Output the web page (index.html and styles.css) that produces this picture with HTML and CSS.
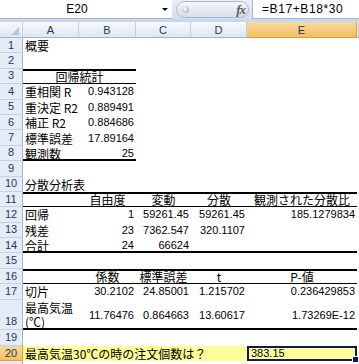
FILE: index.html
```html
<!DOCTYPE html>
<html lang="ja">
<head>
  <meta charset="UTF-8">
  <title>回帰分析 – Excel</title>
  <link rel="stylesheet" href="styles.css">
</head>
<body>

  <!-- Formula bar -->
  <div class="formula-bar">
    <div class="name-box">
      <span class="name-text">E20</span>
      <span class="name-arrow"></span>
    </div>
    <div class="fx-button">
      <span class="fx-knob"></span>
      <span class="fx-label">fx</span>
    </div>
    <div class="formula-input">=B17+B18*30</div>
  </div>
  <div class="bar-gap"></div>

  <!-- Sheet -->
  <div class="sheet">
    <div class="row head-row">
      <div class="hd corner"><span class="corner-mark"></span></div>
      <div class="hd ca">A</div>
      <div class="hd cb">B</div>
      <div class="hd cc">C</div>
      <div class="hd cd">D</div>
      <div class="hd ce sel">E</div>
      <div class="hd cf"></div>
    </div>

    <div class="row"><div class="rh">1</div><div class="cell ca">概要</div></div>
    <div class="row"><div class="rh">2</div></div>
    <div class="row"><div class="rh">3</div><div class="cell cab center head-line">回帰統計</div></div>
    <div class="row"><div class="rh">4</div><div class="cell ca">重相関 R</div><div class="cell cb num">0.943128</div></div>
    <div class="row"><div class="rh">5</div><div class="cell ca">重決定 R2</div><div class="cell cb num">0.889491</div></div>
    <div class="row"><div class="rh">6</div><div class="cell ca">補正 R2</div><div class="cell cb num">0.884686</div></div>
    <div class="row"><div class="rh">7</div><div class="cell ca">標準誤差</div><div class="cell cb num">17.89164</div></div>
    <div class="row"><div class="rh">8</div><div class="cell ca end-line">観測数</div><div class="cell cb num end-line">25</div></div>
    <div class="row"><div class="rh">9</div></div>
    <div class="row"><div class="rh">10</div><div class="cell ca">分散分析表</div></div>

    <div class="row">
      <div class="rh">11</div>
      <div class="cell ca head-line"></div>
      <div class="cell cb center head-line">自由度</div>
      <div class="cell cc center head-line">変動</div>
      <div class="cell cd center head-line">分散</div>
      <div class="cell ce center head-line">観測された分散比</div>
    </div>
    <div class="row">
      <div class="rh">12</div>
      <div class="cell ca">回帰</div>
      <div class="cell cb num">1</div>
      <div class="cell cc num">59261.45</div>
      <div class="cell cd num">59261.45</div>
      <div class="cell ce num">185.1279834</div>
    </div>
    <div class="row">
      <div class="rh">13</div>
      <div class="cell ca">残差</div>
      <div class="cell cb num">23</div>
      <div class="cell cc num">7362.547</div>
      <div class="cell cd num">320.1107</div>
      <div class="cell ce"></div>
    </div>
    <div class="row">
      <div class="rh">14</div>
      <div class="cell ca end-line">合計</div>
      <div class="cell cb num end-line">24</div>
      <div class="cell cc num end-line">66624</div>
      <div class="cell cd end-line"></div>
      <div class="cell ce end-line"></div>
    </div>
    <div class="row"><div class="rh">15</div></div>

    <div class="row">
      <div class="rh">16</div>
      <div class="cell ca head-line"></div>
      <div class="cell cb center head-line">係数</div>
      <div class="cell cc center head-line">標準誤差</div>
      <div class="cell cd center head-line">t</div>
      <div class="cell ce center head-line">P-値</div>
    </div>
    <div class="row">
      <div class="rh">17</div>
      <div class="cell ca">切片</div>
      <div class="cell cb num">30.2102</div>
      <div class="cell cc num">24.85001</div>
      <div class="cell cd num">1.215702</div>
      <div class="cell ce num">0.236429853</div>
    </div>
    <div class="row tall">
      <div class="rh bottom">18</div>
      <div class="cell ca wrap end-line">最高気温<br>(℃)</div>
      <div class="cell cb num end-line">11.76476</div>
      <div class="cell cc num end-line">0.864663</div>
      <div class="cell cd num end-line">13.60617</div>
      <div class="cell ce num end-line">1.73269E-12</div>
    </div>
    <div class="row"><div class="rh">19</div></div>
    <div class="row">
      <div class="rh sel">20</div>
      <div class="cell question">最高気温30℃の時の注文個数は？</div>
      <div class="cell ce active">383.15<span class="fill-handle"></span></div>
    </div>
    <div class="row"><div class="rh"></div></div>
  </div>

</body>
</html>
```

FILE: styles.css
```css
body {
  margin: 0;
  background: #ffffff;
  font-family: "Noto Sans CJK JP", sans-serif;
  font-size: 12px;
  color: #000;
  width: 359px;
  height: 364px;
  overflow: hidden;
}

/* formula bar */
.formula-bar {
  display: flex;
  height: 19px;
  background: linear-gradient(#e9eff8, #d3deee);
}
.name-box {
  width: 172px;
  background: #fff;
  border-bottom: 1px solid #a5b8d3;
  position: relative;
  display: flex;
  align-items: center;
}
.name-text {
  width: 154px;
  text-align: center;
  font-family: "Liberation Sans", sans-serif;
  font-size: 12px;
}
.name-arrow {
  position: absolute;
  left: 162px;
  top: 8px;
  border-left: 3px solid transparent;
  border-right: 3px solid transparent;
  border-top: 3px solid #000;
}
.fx-button {
  width: 73px;
  margin: 1px 3px 1px 4px;
  border: 1px solid #a9b9cf;
  border-radius: 9px;
  background: linear-gradient(#f4f6f9, #d8dee8);
  display: flex;
  align-items: center;
  justify-content: space-between;
  padding: 0 3px 0 5px;
  box-sizing: border-box;
}
.fx-knob {
  width: 7px;
  height: 7px;
  border-radius: 50%;
  background: radial-gradient(circle at 40% 40%, #ffffff, #9aa3b0);
}
.fx-label {
  font-family: "Liberation Serif", serif;
  font-style: italic;
  font-weight: bold;
  font-size: 13px;
  color: #5a5a5a;
  letter-spacing: -1px;
}
.formula-input {
  flex: 1;
  background: #fff;
  border-left: 1px solid #a5b8d3;
  border-bottom: 1px solid #a5b8d3;
  padding-left: 9px;
  line-height: 18px;
  font-family: "Liberation Sans", sans-serif;
  font-size: 12px;
  letter-spacing: 0.6px;
}
.bar-gap {
  height: 3px;
  background: #c9d7ea;
}

/* sheet */
.row {
  display: flex;
  height: 15.4px;
  line-height: 13px;
}
.row.tall {
  height: 30.8px;
}
.head-row {
  height: 16px;
  line-height: 16px;
}
.hd {
  box-sizing: border-box;
  height: 16px;
  text-align: center;
  font-family: "Liberation Sans", sans-serif;
  font-size: 11px;
  color: #1e395b;
  background: linear-gradient(#f6f9fc, #dfe6ef);
  border-right: 1px solid #c5d1df;
  border-bottom: 1px solid #9eb6ce;
}
.hd.sel {
  background: linear-gradient(#f9d99f, #f1c15f);
  border-right-color: #f29536;
  border-bottom-color: #f29536;
}
.corner {
  width: 23px;
  position: relative;
}
.corner-mark {
  position: absolute;
  right: 3px;
  bottom: 2px;
  border-left: 8px solid transparent;
  border-bottom: 8px solid #b6c5d8;
}
.rh {
  width: 23px;
  flex: none;
  box-sizing: border-box;
  display: flex;
  align-items: center;
  justify-content: center;
  font-family: "Liberation Sans", sans-serif;
  font-size: 11px;
  color: #1e395b;
  background: #e4ecf7;
  border-right: 1px solid #9eb6ce;
  border-bottom: 1px solid #c5d1df;
}
.rh.bottom {
  align-items: flex-end;
  padding-bottom: 1px;
}
.rh.sel {
  background: linear-gradient(#f9d99f, #f1c15f);
  border-color: #f29536;
}

.ca { width: 56px; }
.cb { width: 57px; }
.cc { width: 55px; }
.cd { width: 56px; }
.ce { width: 110px; }
.cf { width: 2px; }
.cab { width: 113px; }

.cell {
  flex: none;
  box-sizing: border-box;
  padding: 0 2px;
  white-space: nowrap;
  display: flex;
  align-items: center;
}
.center {
  justify-content: center;
}
.num {
  justify-content: flex-end;
  font-family: "Liberation Sans", sans-serif;
  font-size: 11px;
}
.wrap {
  white-space: normal;
  line-height: 14px;
}
/* table header: thick rule above, thin rule below */
.head-line {
  box-shadow: inset 0 2px #000, inset 0 -1px #000;
}
/* table end: thick rule below */
.end-line {
  box-shadow: inset 0 -2px #000;
}

.question {
  width: 224px;
  background: #ffff99;
}
.active {
  position: relative;
  background: #ffff99;
  border: 2px solid #0c1a63;
  padding-left: 2px;
  font-family: "Liberation Sans", sans-serif;
  font-size: 11px;
}
.fill-handle {
  position: absolute;
  right: -4px;
  bottom: -4px;
  width: 5px;
  height: 5px;
  background: #0c1a63;
  border: 1px solid #fff;
}
```
